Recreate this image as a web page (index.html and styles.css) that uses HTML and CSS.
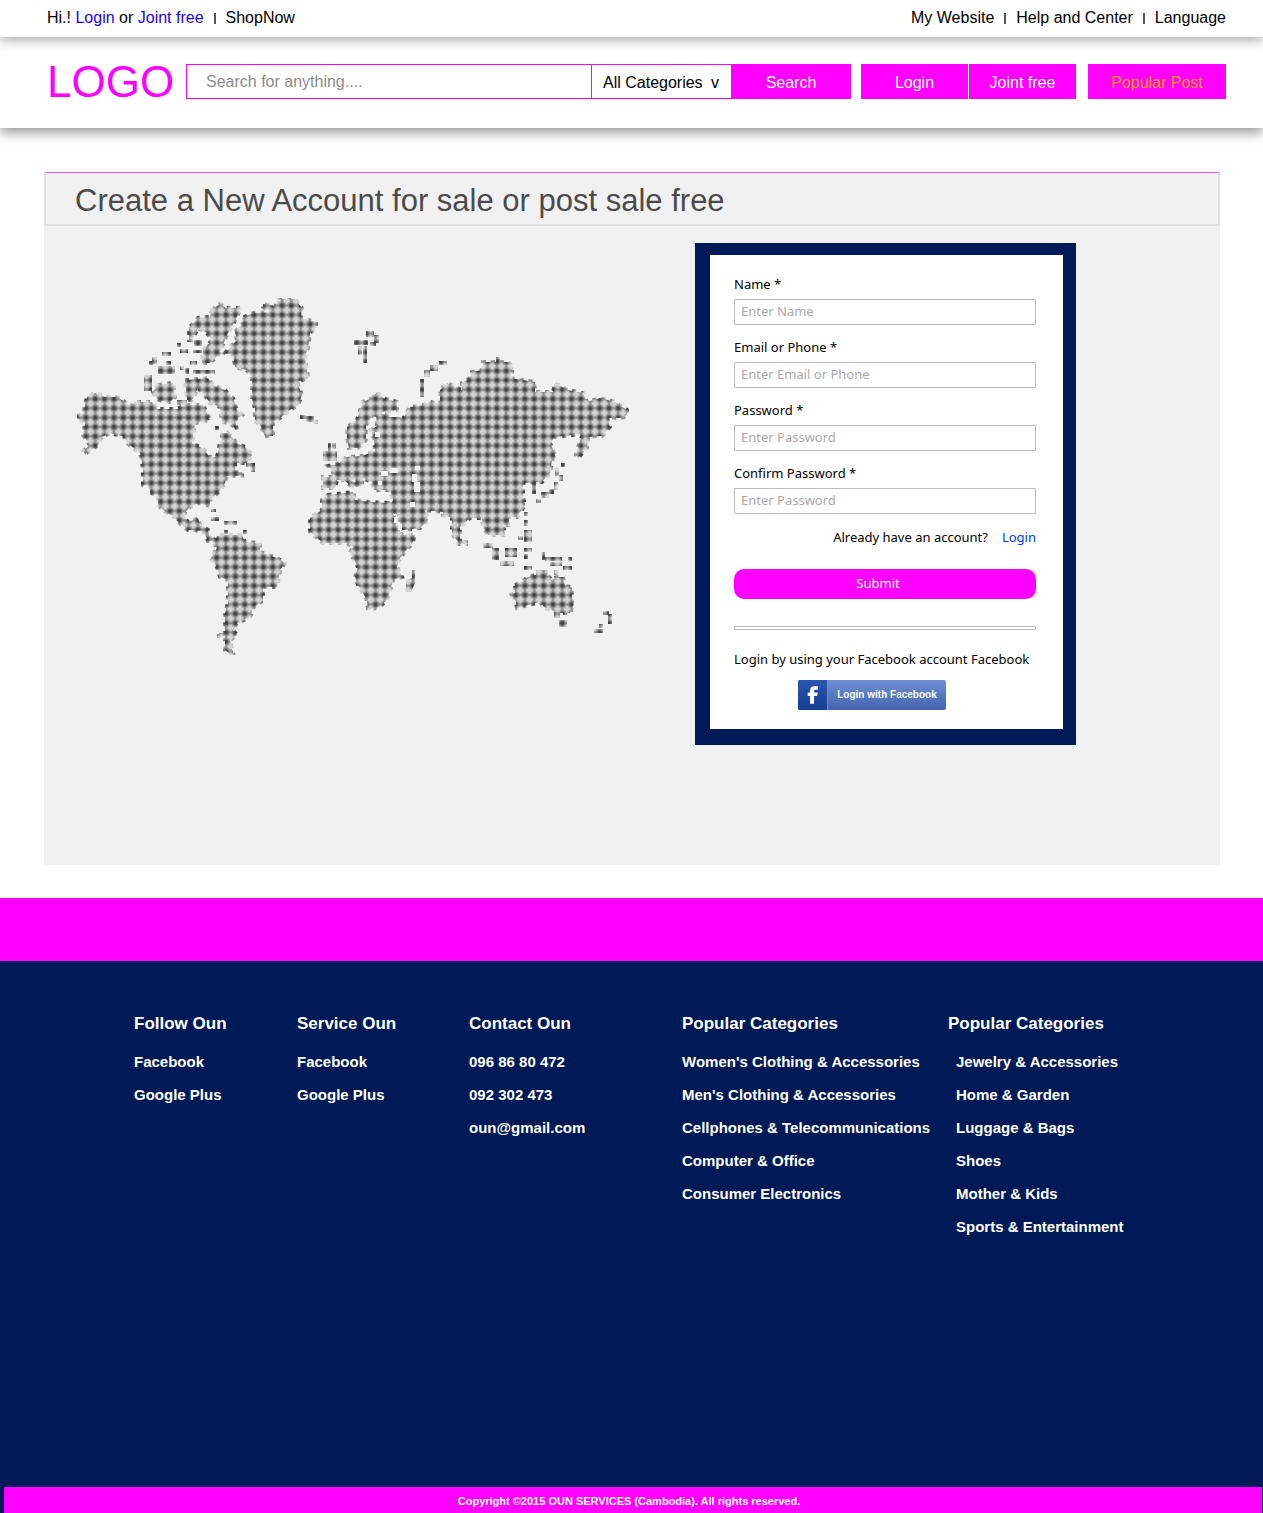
FILE: index.html
```html
<!DOCTYPE html>
<html lang="en">
<head>
<meta charset="utf-8">
<meta name="viewport" content="width=device-width, initial-scale=1">
<title>Create a New Account</title>
<link rel="stylesheet" href="styles.css">
</head>
<body>
<div class="topbar">
  <div class="topbar-group">
    <span>Hi.! <a class="blue" href="#">Login</a> or <a class="blue" href="#">Joint free</a></span>
    <span class="divider"></span>
    <a href="#">ShopNow</a>
  </div>
  <nav class="topbar-group">
    <a href="#">My Website</a>
    <span class="divider"></span>
    <a href="#">Help and Center</a>
    <span class="divider"></span>
    <a href="#">Language</a>
  </nav>
</div>

<header class="header">
  <a class="logo" href="#">LOGO</a>
  <form class="search">
    <input class="search-input" type="text" placeholder="Search for anything...." aria-label="Search">
    <label class="category">
      <select class="category-select" aria-label="Category"><option>All Categories</option></select>
      <span class="category-arrow" aria-hidden="true">v</span>
    </label>
    <button class="btn btn-search" type="submit">Search</button>
  </form>
  <div class="account">
    <button class="btn" type="button">Login</button>
    <button class="btn" type="button">Joint free</button>
  </div>
  <button class="btn btn-popular" type="button">Popular Post</button>
</header>

<main class="panel">
  <h1 class="panel-title">Create a New Account for sale or post sale free</h1>
  <div class="panel-body">
    <svg class="map" viewBox="77 298 552 358" role="img" aria-label="World map">
      <defs>
        <radialGradient id="dot">
          <stop offset="0" stop-color="#303030"/>
          <stop offset=".4" stop-color="#505050"/>
          <stop offset=".75" stop-color="#8c8c8c" stop-opacity=".8"/>
          <stop offset="1" stop-color="#b0b0b0" stop-opacity="0"/>
        </radialGradient>
        <pattern id="dots" patternUnits="userSpaceOnUse" x="90.6" y="403.6" width="9.34" height="9.34">
          <rect width="9.34" height="9.34" fill="#bcbcbc"/>
          <path d="M0 0H9.34V9.34H0Z" fill="none" stroke="#d6d6d6" stroke-width="2"/>
          <path d="M4.67 0V9.34M0 4.67H9.34" stroke="#909090" stroke-width="2.800"/>
          <circle cx="4.67" cy="4.67" r="4.2" fill="url(#dot)"/>
        </pattern>
      </defs>
      <g fill="url(#dots)">
        <g stroke="url(#dots)" stroke-width="4" stroke-dasharray="4 5">
        <path d="M77 416L83 414L87 397L95 393L105 397H117L125 402L130 407L135 402H152L157 409H177L185 405H203L210 420L195 423L192 443L202 448L210 457H217L220 443L228 433L237 443L245 447L252 455L247 463H235V472H242V476H227L225 483L218 493L210 500V506L198 503L190 507L185 512V518L188 522L198 518L200 524L208 530L210 538H220V542L208 541L203 531L188 530L177 521L175 517L167 513L158 505V495L150 493V486L143 485V470L142 462L140 453L127 443L125 437L110 433L102 437L98 445L85 454L83 451L90 445L83 435L85 423L77 418Z"/>
        <path d="M278 299H295L302 308L301 318L316 322V328L310 333L308 347L305 357L308 378L297 382L302 395L298 405L290 410L280 418L273 422V436H265L260 425L255 420V408L252 400V377L247 370L235 367L233 355L225 353L237 340L235 332L243 323L242 318L253 313L272 312L263 307V304L276 306Z"/>
        <path d="M212 310L220 304L226 308H241L238 315L231 328L227 335L222 347L218 355L210 363H202L203 350L212 340L207 333L198 328L192 340H189V328L198 318L210 317Z"/>
        <path d="M185 380L208 378L213 385L225 390L233 398L237 410L242 415L235 420L237 430L230 423L222 422L220 407L210 403L203 393L198 388L192 400H187Z"/>
        <path d="M158 385L173 383L175 397L170 402L158 400L153 392Z"/>
        <path d="M372 398L377 392L383 398L397 402V410L383 412L373 414L366 425V440L358 448H349L347 438V427L357 420L363 402Z"/>
        <path d="M376 413L397 416L403 419L410 407L423 405L430 402L440 404V390L447 383L462 390V383L470 378L472 372L482 370L483 362H508L513 368L510 378L535 382V392H553L555 383L568 390L583 393L587 402L600 398L615 402L627 410V414L623 418H607L610 427L602 436L588 437L587 448L578 458L576 455L580 440L585 432L573 435L555 437L550 443L556 457L552 460L550 473L542 482L523 483V497L525 505L517 517H508V525H503L505 535H497L488 535L483 527L482 518H470L460 527V541L466 540V544H459L452 533V518L443 515V512L425 510L428 520L420 528L403 530L400 522L395 512L390 505L393 500L390 490H374L372 482L363 478L361 487L357 484L354 478L347 476L356 484L353 488L344 480L337 480L335 488H323V477H335L332 470L328 466L338 464L347 457L362 456L375 451L374 440L371 430L377 426Z"/>
        <path d="M328 495L353 492L355 500L370 502L388 503L393 513L398 528L402 535H415L413 542L400 558L397 567L402 577L393 580L388 598L380 607L368 610L367 600L358 585L355 577L358 567L350 553L353 547L347 543H323L310 532V518L322 510V500Z"/>
        <path d="M212 540L222 535H242L245 542L260 543V552L277 558L285 563L280 570L277 587H263V600L253 608L250 617L237 623L233 630L237 635L230 640L233 653H229L225 650V636H219V633H225V613L228 603V580L220 577L217 567L211 558L217 548Z"/>
        <path d="M515 585L523 581L528 577L535 575H547L552 580L557 577H563L565 585L572 588V602L574 604L570 613H560L545 608L540 602L517 608L515 598L509 595L515 593Z"/>
        </g>
        <path d="M158 366h17v8h-17ZM144 375h8v16h-8ZM152 357h5v7h-5ZM149 361h4v4h-4ZM162 352h9v4h-9ZM166 361h5v4h-5ZM177 343h4v4h-4ZM180 349h8v4h-8ZM194 340h8v6h-8ZM193 350h9v3h-9ZM193 370h22v4h-22ZM180 366h4v4h-4ZM185 368h4v6h-4ZM190 361h7v4h-7ZM177 400h10v5h-10ZM215 426h4v4h-4ZM220 433h7v5h-7ZM246 463h9v4h-9ZM251 467h4v5h-4ZM496 357h4v6h-4Z"/>
        <path d="M300 415h6v4h-6ZM306 416h8v6h-8ZM314 420h4v4h-4ZM354 340h14v5h-14ZM366 331h8v6h-8ZM374 335h5v8h-5ZM358 346h4v9h-4ZM363 346h4v17h-4ZM370 342h6v4h-6ZM420 379h4v18h-4ZM424 370h6v7h-6ZM430 365h8v6h-8ZM439 361h8v4h-8ZM328 443h3v8h-3ZM332 443h4v6h-4ZM323 451h14v10h-14Z"/>
        <path d="M412 570H415V583L411 592H406V580L412 578Z"/>
        <path d="M211 517h8v4h-8ZM224 521h13v4h-13ZM211 509h5v3h-5ZM224 530h4v4h-4ZM243 530h4v4h-4Z"/>
        <path d="M559 620h8v7h-8ZM554 612h6v6h-6ZM603 611h6v4h-6ZM608 614h4v10h-4ZM599 624h4v4h-4ZM594 629h9v4h-9ZM483 543h10v5h-10ZM492 548h7v12h-7ZM500 561h14v5h-14ZM505 548h12v9h-12ZM524 530h8v12h-8ZM518 536h5v4h-5ZM524 548h8v4h-8ZM524 554h4v5h-4ZM524 566h8v4h-8ZM542 552h3v8h-3ZM545 557h17v4h-17ZM550 562h12v4h-12ZM568 557h4v4h-4ZM563 566h9v4h-9ZM536 570h12v5h-12ZM554 570h4v5h-4ZM524 512h4v4h-4ZM524 520h4v6h-4ZM506 516h3v8h-3Z"/>
        <path d="M555 468h4v8h-4ZM559 475h4v6h-4ZM554 482h4v8h-4ZM549 489h5v5h-5ZM541 492h8v6h-8ZM536 499h5v4h-5ZM561 463h4v4h-4ZM532 482h4v12h-4Z"/>
      </g>
      <path fill="#f1f1f1" d="M381 471h7v5h-7ZM390 468h8v5h-8ZM378 481h4v4h-4ZM412 474h5v8h-5ZM414 482h6v10h-6ZM415 466h5v4h-5ZM394 517h4v6h-4ZM398 524h4v6h-4ZM410 502h5v5h-5ZM389 413h11v4h-11ZM375 432h5v5h-5Z"/>
    </svg>

    <section class="card">
      <form class="signup">
        <div class="field">
          <label for="name">Name *</label>
          <input id="name" type="text" placeholder="Enter Name">
        </div>
        <div class="field">
          <label for="contact">Email or Phone *</label>
          <input id="contact" type="text" placeholder="Enter Email or Phone">
        </div>
        <div class="field">
          <label for="password">Password *</label>
          <input id="password" type="password" placeholder="Enter Password">
        </div>
        <div class="field">
          <label for="confirm">Confirm Password *</label>
          <input id="confirm" type="password" placeholder="Enter Password">
        </div>
        <p class="already"><span>Already have an account?</span><a href="#">Login</a></p>
        <button class="submit" type="submit">Submit</button>
        <div class="rule"></div>
        <p class="alternative">Login by using your Facebook account Facebook</p>
        <button class="facebook" type="button">
          <svg class="facebook-icon" viewBox="0 0 30 30" aria-hidden="true"><path fill="#fff" d="M12.5 24V16H10V12.500H12.500V10.500C12.500 7.500 14 6 17 6H20.500V9.500H18.300C17 9.500 16.600 10 16.600 11V12.500H20.300L19.800 16H16.600V24Z"/></svg>
          <span class="facebook-label">Login with Facebook</span>
        </button>
      </form>
    </section>
  </div>
</main>

<div class="band"></div>

<footer class="footer">
  <div class="columns">
    <section>
      <h2>Follow Oun</h2>
      <ul><li><a href="#">Facebook</a></li><li><a href="#">Google Plus</a></li></ul>
    </section>
    <section>
      <h2>Service Oun</h2>
      <ul><li><a href="#">Facebook</a></li><li><a href="#">Google Plus</a></li></ul>
    </section>
    <section>
      <h2>Contact Oun</h2>
      <ul><li>096 86 80 472</li><li>092 302 473</li><li><a href="#">oun@gmail.com</a></li></ul>
    </section>
    <section>
      <h2>Popular Categories</h2>
      <ul>
        <li><a href="#">Women's Clothing &amp; Accessories</a></li>
        <li><a href="#">Men's Clothing &amp; Accessories</a></li>
        <li><a href="#">Cellphones &amp; Telecommunications</a></li>
        <li><a href="#">Computer &amp; Office</a></li>
        <li><a href="#">Consumer Electronics</a></li>
      </ul>
    </section>
    <section>
      <h2>Popular Categories</h2>
      <ul class="indented">
        <li><a href="#">Jewelry &amp; Accessories</a></li>
        <li><a href="#">Home &amp; Garden</a></li>
        <li><a href="#">Luggage &amp; Bags</a></li>
        <li><a href="#">Shoes</a></li>
        <li><a href="#">Mother &amp; Kids</a></li>
        <li><a href="#">Sports &amp; Entertainment</a></li>
      </ul>
    </section>
  </div>
  <p class="copyright">Copyright ©2015 OUN SERVICES (Cambodia). All rights reserved.</p>
</footer>
</body>
</html>
```
FILE: styles.css
```css
* {
  box-sizing: border-box;
}

body {
  margin: 0;
  background: #fff;
  color: #000;
  font: 16px/20px "Liberation Sans", Arial, sans-serif;
}

a {
  color: inherit;
  text-decoration: none;
}

button,
input,
select {
  font: inherit;
  margin: 0;
  padding: 0;
  border: 0;
  border-radius: 0;
}

button {
  cursor: pointer;
}

/* Top bar */
.topbar {
  position: relative;
  z-index: 2;
  display: flex;
  justify-content: space-between;
  height: 37px;
  padding: 8px 37px 0 47px;
  background: #fff;
  box-shadow: 0 4px 12px rgba(0, 0, 0, .3);
}

.topbar-group {
  display: flex;
  gap: 10px;
}

.blue {
  color: #1a00ff;
}

.divider {
  width: 2px;
  height: 11px;
  margin-top: 5px;
  background: #555;
}

/* Header */
.header {
  position: relative;
  z-index: 1;
  display: flex;
  height: 91px;
  padding: 27px 37px 0 47px;
  background: #fff;
  box-shadow: 0 4px 12px rgba(0, 0, 0, .45);
}

.logo {
  width: 139px;
  color: #f0f;
  font-size: 44px;
  line-height: 35px;
}

.search {
  display: flex;
  flex: 1;
  height: 35px;
  margin-right: 10px;
}

.search-input {
  flex: 1;
  min-width: 0;
  padding: 0 19px;
  border: 1px solid #f0f;
}

.search-input::placeholder {
  color: #8c8c8c;
  opacity: 1;
}

.category {
  display: flex;
  align-items: center;
  width: 139px;
  padding: 2px 12px 0 11px;
  border: solid #f0f;
  border-width: 1px 0;
}

.category-select {
  flex: 1;
  min-width: 0;
  appearance: none;
  background: none;
  color: #000;
}

.btn {
  width: 107px;
  height: 35px;
  padding-top: 2px;
  background: #f0f;
  color: #fff;
}

.btn-search {
  width: 120px;
}

.account {
  display: flex;
  gap: 1px;
  margin-right: 12px;
}

.btn-popular {
  width: 138px;
  color: #ff9c1a;
}

/* Account panel */
.panel {
  margin: 44px 43px 33px 44px;
  background: #f1f1f1;
}

.panel-title {
  margin: 0;
  height: 54px;
  padding: 10px 29px;
  border: 2px solid #e2dfe0;
  border-top: 1px solid #f050e8;
  color: #4b4b4b;
  font-size: 31px;
  font-weight: 400;
  line-height: 36px;
}

.panel-body {
  display: flex;
  align-items: flex-start;
  padding: 17px 144px 120px 33px;
}

.map {
  flex: 1;
  min-width: 0;
  margin: 55px 66px 0 0;
}

.card {
  width: 381px;
  border: solid #001a57;
  border-width: 12px 13px 16px 15px;
  background: #fff;
  font-family: "Noto Sans", "DejaVu Sans", sans-serif;
  font-size: 13px;
}

.signup {
  display: flex;
  flex-direction: column;
  padding: 19px 27px 19px 24px;
}

.field {
  display: flex;
  flex-direction: column;
  gap: 5px;
  margin-bottom: 11px;
}

.field input {
  height: 26px;
  padding: 0 6px 2px;
  border: 1px solid #bbb;
  border-radius: 1px;
  background: #fff;
}

.field + .field {
  margin-top: 1px;
}

.field input::placeholder {
  color: #aaa;
  opacity: 1;
}

.already {
  display: flex;
  justify-content: flex-end;
  gap: 14px;
  margin: 2px 0 22px;
}

.already a {
  color: #0034ff;
}

.submit {
  height: 30px;
  padding: 0 14px 2px 0;
  border-radius: 10px;
  background: #f0f;
  color: #fff;
}

.rule {
  height: 4px;
  margin: 27px 0 19px;
  border: 1px solid #bbb;
  border-radius: 1px;
}

.alternative {
  margin: 0 0 11px;
  white-space: nowrap;
}

.facebook {
  display: flex;
  align-items: center;
  align-self: center;
  width: 148px;
  height: 30px;
  margin-right: 26px;
  overflow: hidden;
  border-radius: 2px;
  background: linear-gradient(#6e8fd3, #4265ae);
  color: #fff;
  font: bold 10px/12px "Liberation Sans", Arial, sans-serif;
}

.facebook-icon {
  width: 30px;
  height: 30px;
  border-right: 1px solid #6f8fd0;
  background: linear-gradient(#2c56b0, #133e94);
}

.facebook-label {
  flex: 1;
}

/* Footer */
.band {
  height: 63px;
  background: #f0f;
}

.footer {
  background: #001a57;
  color: #fff;
}

.columns {
  display: grid;
  grid-template-columns: 163fr 172fr 213fr 266fr 315fr;
  min-height: 526px;
  padding: 51px 0 48px 134px;
}

.columns h2 {
  margin: 0 0 9px;
  font-size: 17px;
  font-weight: 700;
  line-height: 24px;
}

.columns ul {
  margin: 0;
  padding: 0;
  list-style: none;
  font-size: 15px;
  font-weight: 700;
  line-height: 33px;
}

.columns .indented {
  padding-left: 8px;
}

.copyright {
  margin: 0 1px 0 4px;
  padding: 6px 8px 4px 0;
  background: #f0f;
  font-size: 11px;
  font-weight: 700;
  line-height: 16px;
  text-align: center;
}
```
